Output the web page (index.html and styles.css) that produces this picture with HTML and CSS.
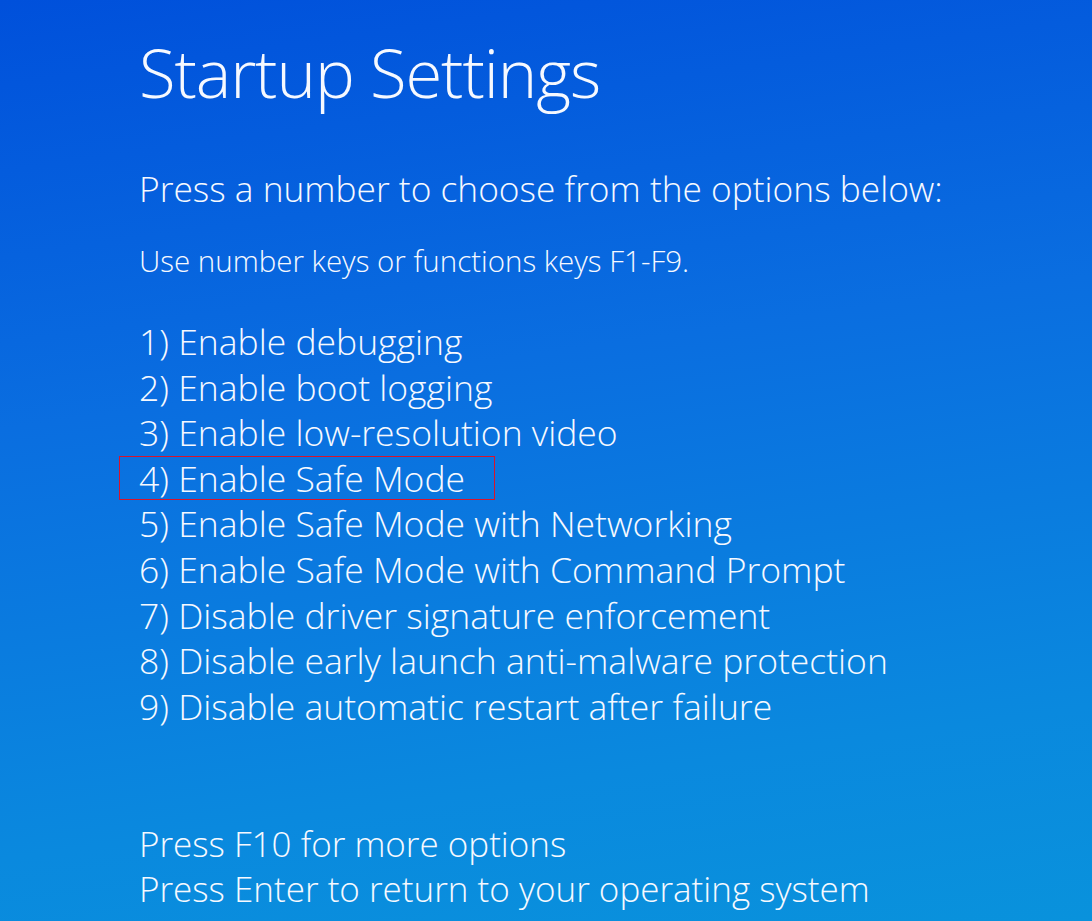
FILE: index.html
```html
<!DOCTYPE html>
<html lang="en">

<head>
    <meta charset="UTF-8">
    <meta name="viewport" content="width=device-width, initial-scale=1.0">
    <title>Startup Settings</title>
    <link rel="stylesheet" href="styles.css">
</head>

<body>

    <div class="screen">
        <h1 class="title">Startup Settings</h1>

        <p class="lead">Press a number to choose from the options below:</p>
        <p class="hint">Use number keys or functions keys F1-F9.</p>

        <!-- Boot options -->
        <ol class="options">
            <li>1) Enable debugging</li>
            <li>2) Enable boot logging</li>
            <li>3) Enable low-resolution video</li>
            <li class="selected">4) Enable Safe Mode</li>
            <li>5) Enable Safe Mode with Networking</li>
            <li>6) Enable Safe Mode with Command Prompt</li>
            <li>7) Disable driver signature enforcement</li>
            <li>8) Disable early launch anti-malware protection</li>
            <li>9) Disable automatic restart after failure</li>
        </ol>

        <div class="footer">
            <p>Press F10 for more options</p>
            <p>Press Enter to return to your operating system</p>
        </div>
    </div>

</body>

</html>
```

FILE: styles.css
```css
html,
body {
    margin: 0;
    height: 100%;
}

.screen {
    height: 100vh;
    box-sizing: border-box;
    padding: 32px 0 0 139px;
    background: linear-gradient(172deg, #0050db 0%, #0a6ee0 40%, #0a89de 80%, #0992dc 100%);
    color: #f6f9ff;
    font-family: "Open Sans", "Segoe UI", sans-serif;
    font-weight: 300;
    overflow: hidden;
}

.title {
    margin: 0;
    font-size: 67px;
    line-height: 80px;
    font-weight: 300;
    letter-spacing: -1.1px;
}

.lead {
    margin: 53px 0 0;
    font-size: 35.3px;
    line-height: 46px;
}

.hint {
    margin: 30px 0 0;
    font-size: 29.5px;
    line-height: 40px;
}

.options {
    list-style: none;
    margin: 38px 0 0;
    padding: 0;
    font-size: 35.5px;
    line-height: 45.6px;
}

.options .selected {
    box-sizing: border-box;
    width: 376px;
    height: 44px;
    margin-left: -20px;
    padding-left: 19px;
    border: 1px solid #d8142c;
    line-height: 42px;
    margin-bottom: 1.6px;
}

.footer {
    margin-top: 92px;
    font-size: 35px;
    line-height: 45px;
}

.footer p {
    margin: 0;
}
```
